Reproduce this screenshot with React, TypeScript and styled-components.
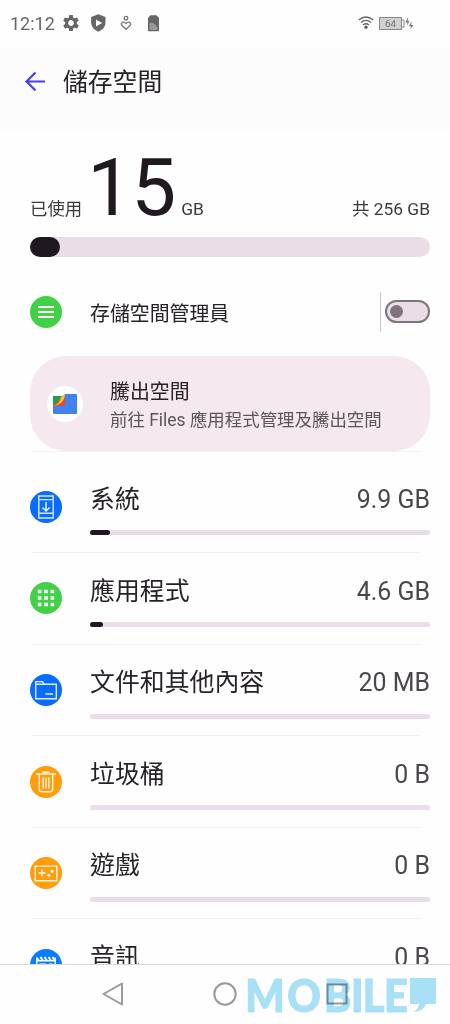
import React from 'react';
import styled, { createGlobalStyle } from 'styled-components';

const Global = createGlobalStyle`
  * { box-sizing: border-box; }
  body { margin: 0; background: #fefefe; font-family: Roboto, "Noto Sans CJK TC", sans-serif; color: #262228; }
  svg { display: block; flex: none; }
`;

const Screen = styled.div`
  width: 450px;
  height: 1024px;
  display: flex;
  flex-direction: column;
  overflow: hidden;
  position: relative;
`;

const StatusBar = styled.div`
  height: 47px;
  flex: none;
  display: flex;
  align-items: center;
  padding: 0 36px 2px 10px;
  color: #666;
`;

const Clock = styled.span`
  font-size: 18px;
  line-height: 22px;
  width: 52px;
  padding-top: 2px;
`;

const StatusRight = styled.div`
  margin-left: auto;
  display: flex;
`;

const Header = styled.header`
  height: 83px;
  flex: none;
  display: flex;
  align-items: center;
  padding: 0 24px 14px;
  gap: 17px;
  background: #fcfcfc;
`;

const Title = styled.h1`
  margin: 0;
  padding-top: 2px;
  font-size: 24.8px;
  line-height: 36px;
  font-weight: 400;
`;

const Content = styled.main`
  height: 834px;
  flex: none;
  overflow: hidden;
  padding: 0 20px 0 30px;
`;

const Summary = styled.div`
  height: 107px;
  display: flex;
  align-items: baseline;
  font-size: 17.4px;
  line-height: 26px;
  color: #3c383d;
`;

const Used = styled.span`
  font-size: 80px;
  line-height: 117px;
  letter-spacing: -1px;
  color: #201a20;
  margin: 0 4px 0 5px;
  width: 90px;
`;

const Total = styled.span`
  margin-left: auto;
`;

const Track = styled.div<{ $thick?: boolean }>`
  height: ${p => (p.$thick ? 20 : 5)}px;
  border-radius: 10px;
  background: #eadde8;
`;

const Fill = styled.div<{ $w: number }>`
  width: ${p => p.$w}px;
  height: 100%;
  border-radius: 10px;
  background: #1e191e;
`;

const Manager = styled.div`
  height: 99px;
  display: flex;
  align-items: center;
  padding-top: 10px;
`;

const Badge = styled.div<{ $color: string }>`
  width: 32px;
  height: 32px;
  flex: none;
  border-radius: 50%;
  background: ${p => p.$color};
  display: grid;
  place-items: center;
`;

const ManagerLabel = styled.span`
  margin-left: 28px;
  font-size: 19.9px;
  line-height: 30px;
  padding-top: 6px;
`;

const ManagerEnd = styled.div`
  margin-left: auto;
  height: 40px;
  padding-left: 4px;
  border-left: 1px solid #cbc7cb;
  display: flex;
  align-items: center;
`;

const Switch = styled.div`
  width: 45px;
  height: 23px;
  border: 2px solid #7d747d;
  border-radius: 12px;
  background: #eadde8;
  display: flex;
  align-items: center;
  padding-left: 3px;
`;

const Knob = styled.div`
  width: 13px;
  height: 13px;
  border-radius: 50%;
  background: #7d747d;
`;

const Card = styled.div`
  height: 95px;
  border-radius: 36px;
  background: #f5e8ef;
  display: flex;
  align-items: center;
  padding-left: 17px;
  gap: 27px;
`;

const FilesIcon = styled.div`
  width: 36px;
  height: 36px;
  border-radius: 50%;
  background: #fff;
  display: grid;
  place-items: center;
`;

const CardBody = styled.div`
  padding-top: 5px;
`;

const CardTitle = styled.div`
  font-size: 19.9px;
  line-height: 28px;
`;

const CardText = styled.div`
  font-size: 17.45px;
  line-height: 26px;
  color: #5b555c;
`;

const Rule = styled.div`
  height: 1px;
  width: 388px;
  margin-left: 2px;
  background: #f2f1f2;
`;

const Row = styled.div<{ $first?: boolean }>`
  height: ${p => (p.$first ? 100 : 90.6)}px;
  padding-top: ${p => (p.$first ? 9.4 : 0)}px;
  display: flex;
  gap: 28px;
  & > ${Badge} { margin-top: 29.4px; }
`;

const RowBody = styled.div`
  flex: 1;
  padding-top: 20.6px;
`;

const RowText = styled.div`
  height: 48.4px;
  display: flex;
  justify-content: space-between;
  align-items: baseline;
  font-size: 24.9px;
  line-height: 36px;
`;

const Size = styled.span`
  color: #4b464c;
`;

const NavBar = styled.nav`
  height: 60px;
  flex: none;
  border-top: 1px solid #d8d8d8;
  display: flex;
  align-items: center;
  justify-content: space-between;
  padding: 0 101px 1px;
`;

const Watermark = styled.svg`
  position: absolute;
  left: 244px;
  top: 970px;
  mix-blend-mode: multiply;
`;

const Line = ({ children }: { children: React.ReactNode }) => (
  <svg width="24" height="24" viewBox="0 0 24 24" fill="none" stroke="#fff" strokeWidth="1.4">{children}</svg>
);

const icons = {
  system: (
    <Line>
      <path d="M4.8 1H19.2V23H4.8ZM4.8 4.6H19.2M4.8 18.3H19.2" stroke="#d8e8ff" />
      <path d="M12 7V15.8M8.4 12.4L12 16L15.6 12.4" />
    </Line>
  ),
  apps: (
    <Line>
      <path d="M3.8 5.5h3.6M10.2 5.5h3.6M16.6 5.5h3.6M3.8 12h3.6M10.2 12h3.6M16.6 12h3.6M3.8 18.5h3.6M10.2 18.5h3.6M16.6 18.5h3.6" strokeWidth="3.6" />
    </Line>
  ),
  files: (
    <Line>
      <path d="M1.7 20.8V3.6H8.5L10.3 6.3H22.3V20.8ZM1.7 6.3H10.3M11.3 16H19" stroke="#e1edff" />
    </Line>
  ),
  trash: (
    <Line>
      <path d="M2 4H22M9 3.7V2.3H15V3.7M5.3 4V19.2Q5.3 21.8 8 21.8H16Q18.7 21.8 18.7 19.2V4M9.2 7.5V18.5M12 7.5V18.5M14.8 7.5V18.5" stroke="#fff5df" />
    </Line>
  ),
  games: (
    <Line>
      <path d="M1.2 5.1H22.8V19.8H1.2Z" stroke="#fff5df" />
      <path d="M4.6 12H11.4M8 8.6V15.4" />
      <circle cx="14.9" cy="14.3" r="1.6" fill="#fff" stroke="none" />
      <circle cx="18.2" cy="10.3" r="1.6" fill="#fff" stroke="none" />
    </Line>
  ),
  audio: (
    <Line>
      <path d="M2.8 4.5V21H21.2V4.5M2.8 7.8H21.2" />
      <path d="M3 5L5 7.8M6.5 4L9 7.8M10.5 4L13 7.8M14.5 4L17 7.8M18.5 4L21 7.8" strokeWidth="2" />
      <path d="M5.5 11.2H12M15 11.2H18.5M5.5 14H18.5" />
    </Line>
  ),
};

const rows = [
  { icon: 'system', color: '#0a6cff', name: '系統', size: '9.9 GB', used: 20 },
  { icon: 'apps', color: '#41d046', name: '應用程式', size: '4.6 GB', used: 13 },
  { icon: 'files', color: '#0a6cff', name: '文件和其他內容', size: '20 MB', used: 0 },
  { icon: 'trash', color: '#ff9d0a', name: '垃圾桶', size: '0 B', used: 0 },
  { icon: 'games', color: '#ff9d0a', name: '遊戲', size: '0 B', used: 0 },
  { icon: 'audio', color: '#0a7cff', name: '音訊', size: '0 B', used: 0 },
] as const;

const StatusIcons = () => (
  <svg width="100" height="20" viewBox="0 0 100 20">
    <g transform="translate(9 10)">
      <circle r="4.4" fill="none" stroke="#666" strokeWidth="3" />
      {[0, 60, 120, 180, 240, 300].map(a => (
        <rect key={a} x="-2" y="-8" width="4" height="4" rx="0.7" fill="#666" transform={`rotate(${a})`} />
      ))}
    </g>
    <path d="M36.3 1.3L43.5 4V9.5Q43.5 15.5 36.3 18.8Q29.1 15.5 29.1 9.5V4Z" fill="#666" />
    <path d="M34 6.5L40.2 10L34 13.5Z" fill="#fff" />
    <g fill="none" stroke="#777" strokeWidth="1.3">
      <circle cx="64" cy="5.2" r="1.8" />
      <path d="M64 16.3L60 12.5Q58.6 10.7 60.2 9.4Q62.2 8.3 64 10.6Q65.8 8.3 67.8 9.4Q69.4 10.7 68 12.5Z" />
    </g>
    <path d="M86 5L88.5 2.3H94.5L97 5V17.5Q97 18.2 96.3 18.2H86.7Q86 18.2 86 17.5Z" fill="#666" />
    <path d="M87.5 17V9.5Q95 9.8 95.8 17Z" fill="#999" />
  </svg>
);

const ConnectionIcons = () => (
  <svg width="56" height="20" viewBox="0 0 56 20">
    <g fill="none" stroke="#666" strokeWidth="1.3">
      <path d="M0.8 7.1Q8 0.9 15.2 7.1M2.9 9.6Q8 5.2 13.1 9.6M5 12Q8 9.4 11 12" />
    </g>
    <circle cx="8" cy="14.2" r="1.6" fill="#555" />
    <rect x="21.5" y="4.5" width="22" height="12" fill="#d0d0d0" stroke="#888" />
    <path d="M44 7H46V14H44" fill="none" stroke="#888" />
    <text x="32.5" y="14.1" fontSize="9.8" fontFamily="Roboto" textAnchor="middle" fill="#707070">64</text>
    <path d="M50.2 4L47.3 9.4H49.5L49 13L51.5 8H49.7ZM53.6 8L51 13.2H53L52.4 16.5L55.3 11.9H53.2Z" fill="#777" />
  </svg>
);

export default function App() {
  return (
    <Screen>
      <Global />
      <StatusBar>
        <Clock>12:12</Clock>
        <StatusIcons />
        <StatusRight><ConnectionIcons /></StatusRight>
      </StatusBar>
      <Header>
        <svg width="22" height="22" viewBox="0 0 22 22" fill="none" stroke="#4340ee" strokeWidth="2.2">
          <path d="M21 10.5H3M11.5 1.5L2.5 10.5L11.5 19.5" />
        </svg>
        <Title>儲存空間</Title>
      </Header>
      <Content>
        <Summary>
          <span>已使用</span>
          <Used>15</Used>
          <span>GB</span>
          <Total>共 256 GB</Total>
        </Summary>
        <Track $thick><Fill $w={30} /></Track>
        <Manager>
          <Badge $color="#41d046">
            <svg width="16" height="14" viewBox="0 0 16 14" stroke="#fff" strokeWidth="2">
              <path d="M0 2H16M0 7H16M0 12H16" />
            </svg>
          </Badge>
          <ManagerLabel>存儲空間管理員</ManagerLabel>
          <ManagerEnd><Switch><Knob /></Switch></ManagerEnd>
        </Manager>
        <Card>
          <FilesIcon>
            <svg width="26" height="22" viewBox="0 0 26 22">
              <rect x="1" y="1" width="24" height="20" rx="1.2" fill="#4381ee" />
              <path d="M0 0H13V3H0Z" fill="#fff" />
              <path d="M1 13V4Q1 3 2 3H11L13 1V13Z" fill="#279b56" />
              <path d="M1 13L10 4.5L13 1V13Z" fill="#df4736" />
              <path d="M1 13Q8 11 9 4L13 0.5V3Q11 12 1 13Z" fill="#fbc22b" />
            </svg>
          </FilesIcon>
          <CardBody>
            <CardTitle>騰出空間</CardTitle>
            <CardText>前往 Files 應用程式管理及騰出空間</CardText>
          </CardBody>
        </Card>
        {rows.map((r, i) => (
          <React.Fragment key={r.name}>
            <Rule />
            <Row $first={i === 0}>
              <Badge $color={r.color}>{icons[r.icon]}</Badge>
              <RowBody>
                <RowText>
                  <span>{r.name}</span>
                  <Size>{r.size}</Size>
                </RowText>
                <Track>{r.used > 0 && <Fill $w={r.used} />}</Track>
              </RowBody>
            </Row>
          </React.Fragment>
        ))}
      </Content>
      <NavBar>
        <svg width="24" height="26" viewBox="0 0 24 26" fill="none" stroke="#999" strokeWidth="2" strokeLinejoin="round">
          <path d="M21 2.5V23.5L2.5 13Z" />
        </svg>
        <svg width="24" height="24" viewBox="0 0 24 24" fill="none" stroke="#999" strokeWidth="2">
          <circle cx="12" cy="12" r="10.7" />
        </svg>
        <svg width="24" height="24" viewBox="0 0 24 24" fill="none" stroke="#999" strokeWidth="2">
          <rect x="2.5" y="2.5" width="19" height="19" />
        </svg>
      </NavBar>
      <Watermark width="200" height="50" viewBox="0 0 200 50" fill="#a9e2f7">
        <text x="1.5 48 89 119 132 155.5" y="41.5" transform="scale(0.9 1)" fontFamily="Lato" fontWeight="900" fontSize="46" stroke="#a9e2f7" strokeWidth="1.2">MOBILE</text>
        <path d="M166 8H192V34H182Q180 41 170 42Q175 38 175 34H166Z" />
      </Watermark>
    </Screen>
  );
}
